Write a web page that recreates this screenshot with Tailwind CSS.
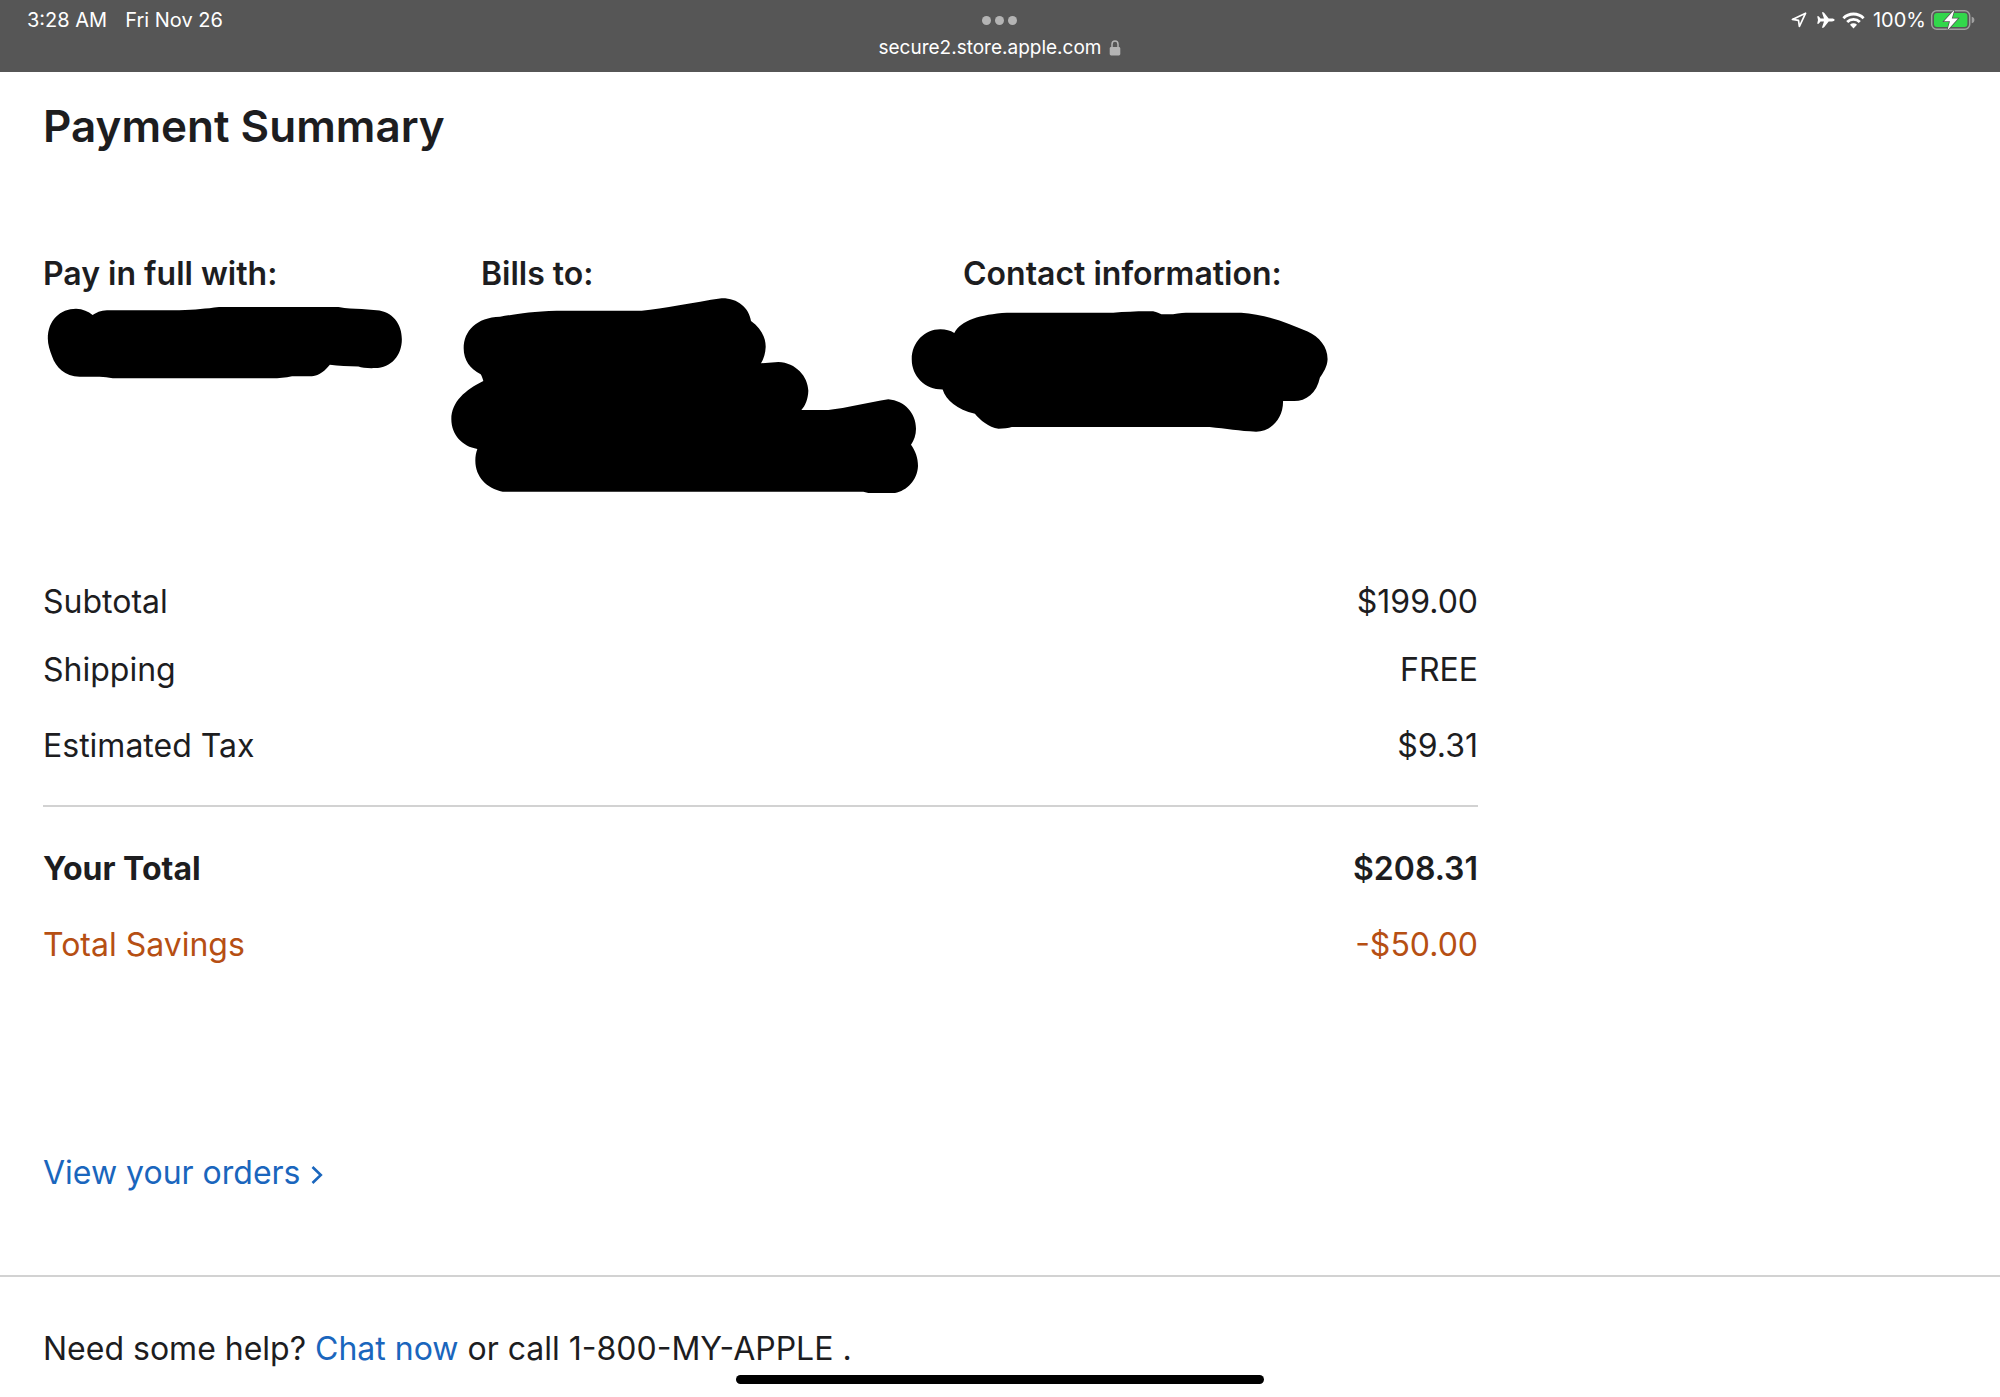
<!DOCTYPE html>
<html lang="en">

<head>
    <meta charset="UTF-8">
    <meta name="viewport" content="width=device-width, initial-scale=1.0">
    <title>Payment Summary</title>
    <script src="https://cdn.jsdelivr.net/npm/@tailwindcss/browser@4"></script>
</head>

<body class="bg-white text-[#1d1d1f] font-['Inter',sans-serif] text-[32px] leading-[40px]">
    <!-- status bar -->
    <header class="grid grid-cols-3 h-[72px] bg-[#565656] text-white text-[20px] leading-[24px]">
        <div class="flex items-start gap-[18px] pl-[27px] pt-[8px]">
            <span>3:28 AM</span>
            <span>Fri Nov 26</span>
        </div>
        <div class="flex flex-col items-center pt-[16px]">
            <div class="flex gap-[4px]">
                <span class="size-[9px] rounded-full bg-[#b4b4b4]"></span>
                <span class="size-[9px] rounded-full bg-[#b4b4b4]"></span>
                <span class="size-[9px] rounded-full bg-[#b4b4b4]"></span>
            </div>
            <div class="flex items-center gap-[8px] mt-[11px] text-[19px]">
                <span>secure2.store.apple.com</span>
                <svg class="w-[12px] h-[16px]" viewBox="0 0 12 16" fill="none">
                    <path d="M3 8V4.2a3 3.2 0 0 1 6 0V8" stroke="#b4b4b4" stroke-width="1.5" />
                    <rect x="0.7" y="7" width="10.6" height="8.5" rx="1.4" fill="#b4b4b4" />
                </svg>
            </div>
        </div>
        <div class="flex items-start justify-end pr-[24px] pt-[8px]">
            <div class="flex items-center h-[24px]">
                <svg class="w-[16px] h-[16px] mr-[9px]" viewBox="0 0 16 16" fill="none">
                    <path d="M14.6 1.2 1.4 7.4l6.1.9.9 6.2z" stroke="#fff" stroke-width="1.7" stroke-linejoin="round" />
                </svg>
                <svg class="w-[19px] h-[16px] mr-[7px]" viewBox="0 0 19 16" fill="#fff">
                    <path d="M18.6 8c0-.8-1.2-1.4-2.6-1.4h-3.3L8.300.9C8 .5 7.600.2 7.100.2h-1.200l2.100 6.400H4.500L2.700 4.200H1.200L2 8l-.8 3.800h1.500l1.800-2.400H8l-2.100 6.400h1.200c.5 0 .9-.3 1.200-.7l4.400-5.700H16c1.400 0 2.600-.6 2.600-1.400z" />
                </svg>
                <svg class="w-[23px] h-[17px] mr-[8px]" viewBox="0 0 23 17" fill="none">
                    <path d="M1.400 6.200a14.300 14.300 0 0 1 20.200 0M5.200 10a8.900 8.900 0 0 1 12.600 0" stroke="#fff" stroke-width="2.900" />
                    <path d="M11.500 16.400 8 12.800a5 5 0 0 1 7 0z" fill="#fff" />
                </svg>
                <span>100%</span>
                <svg class="w-[46px] h-[22px] ml-[4px]" viewBox="0 0 46 22" fill="none">
                    <rect x="1.700" y="1.700" width="38" height="18.600" rx="5" stroke="#a0a0a0" stroke-width="1.500" />
                    <rect x="4" y="4" width="33.400" height="14" rx="3" fill="#32d74b" />
                    <path d="M41.700 7.800c2 .5 2.700 1.800 2.700 3.200s-.7 2.700-2.700 3.200z" fill="#a0a0a0" />
                    <path d="M24.400.8 14 12.200h6l-2.600 9 10.600-11.600h-6.200z" fill="#fff" stroke="#565656" stroke-width="1.500" paint-order="stroke" />
                </svg>
            </div>
        </div>
    </header>

    <main>
        <div class="max-w-[1521px] px-[43px] pt-[26px]">
            <h1 class="text-[44px] leading-[56px] font-semibold">Payment Summary</h1>

            <section class="grid grid-cols-[438px_482px_1fr] mt-[100px]">
                <div>
                    <h2 class="font-semibold">Pay in full with:</h2>
                    <svg class="w-[356px] h-[73px] ml-[4px] mt-[12px]" viewBox="54 198 1068 220">
                        <path d="M54 296C54 240 92 206 139 206C160 207 176 214 189 225C207 214 218 211 240 211H450C500 209 530 206 570 201H930C955 206 975 206 1000 207L1045 211C1092 214 1121 252 1121 298C1121 346 1090 384 1040 385C1020 386 1000 384 990 380C960 380 930 379 904 375C890 392 874 407 850 410H790C770 415 750 416 730 416H250C235 414 225 411 210 411H150C105 410 78 382 67 350C60 332 54 315 54 296Z" />
                    </svg>
                </div>
                <div>
                    <h2 class="font-semibold">Bills to:</h2>
                    <svg class="w-[467px] h-[196px] ml-[-30px] mt-[4px]" viewBox="63 174 1401 588">
                        <path d="M101 325C101 272 140 232 210 230C250 224 300 214 380 212H635C700 207 790 187 875 175C922 174 957 203 963 243C992 264 1008 292 1007 322C1006 343 1000 358 993 370L1045 366C1098 368 1134 410 1135 452C1134 478 1126 497 1114 510H1195C1250 504 1315 488 1375 478C1424 482 1458 520 1458 566C1458 584 1452 601 1443 614C1456 632 1464 653 1464 678C1462 722 1430 752 1395 759H1315L1300 755H218C170 745 136 710 136 662C136 648 138 638 142 627C97 620 64 584 64 538C64 485 106 450 160 423C158 415 155 408 152 403C120 387 101 360 101 325Z" />
                    </svg>
                </div>
                <div>
                    <h2 class="font-semibold">Contact information:</h2>
                    <svg class="w-[417px] h-[121px] ml-[-52px] mt-[17px]" viewBox="63 212 1252 364">
                        <path d="M64 357C64 306 103 267 150 267C167 267 180 271 192 278C212 240 270 222 350 217H670C710 214 755 212 790 213C803 215 808 220 815 222H850C870 218 885 217 900 217H1055C1120 221 1190 245 1255 274C1290 290 1315 320 1315 357C1314 380 1302 397 1292 412C1282 460 1250 483 1215 483H1181C1182 535 1145 575 1100 575C1050 573 1010 566 960 561H365C355 565 340 566 325 566C295 562 270 540 254 521C200 508 167 480 157 448C103 448 64 408 64 357Z" />
                    </svg>
                </div>
            </section>

            <table class="w-full mt-[88px]">
                <tbody>
                    <tr>
                        <th scope="row" class="text-left font-normal p-0">Subtotal</th>
                        <td class="text-right p-0">$199.00</td>
                    </tr>
                    <tr>
                        <th scope="row" class="text-left font-normal pt-[28px]">Shipping</th>
                        <td class="text-right pt-[28px]">FREE</td>
                    </tr>
                    <tr class="border-b-2 border-[#d2d2d2]">
                        <th scope="row" class="text-left font-normal pt-[36px] pb-[39px]">Estimated Tax</th>
                        <td class="text-right pt-[36px] pb-[39px]">$9.31</td>
                    </tr>
                    <tr class="font-semibold">
                        <th scope="row" class="text-left pt-[42px]">Your Total</th>
                        <td class="text-right pt-[42px]">$208.31</td>
                    </tr>
                    <tr class="text-[#b64f13]">
                        <th scope="row" class="text-left font-normal pt-[36px]">Total Savings</th>
                        <td class="text-right pt-[36px]">-$50.00</td>
                    </tr>
                </tbody>
            </table>

            <a href="#" class="flex w-fit items-center gap-[10px] mt-[188px] text-[#1a66bd]">
                View your orders
                <svg class="w-[12px] h-[20px] mt-[4px]" viewBox="0 0 12 20" fill="none">
                    <path d="M1.500 2 9.800 10l-8.300 8" stroke="currentColor" stroke-width="2.600" />
                </svg>
            </a>
        </div>
    </main>

    <footer class="mt-[82px] border-t-2 border-[#d2d2d2] px-[43px] pt-[52px] pb-[24px]">
        <p>Need some help? <a href="#" class="text-[#1a66bd]">Chat now</a> or call 1-800-MY-APPLE .</p>
    </footer>

    <!-- home indicator -->
    <div class="fixed bottom-[13px] left-1/2 -translate-x-1/2 w-[528px] h-[9px] rounded-full bg-black"></div>
</body>

</html>
